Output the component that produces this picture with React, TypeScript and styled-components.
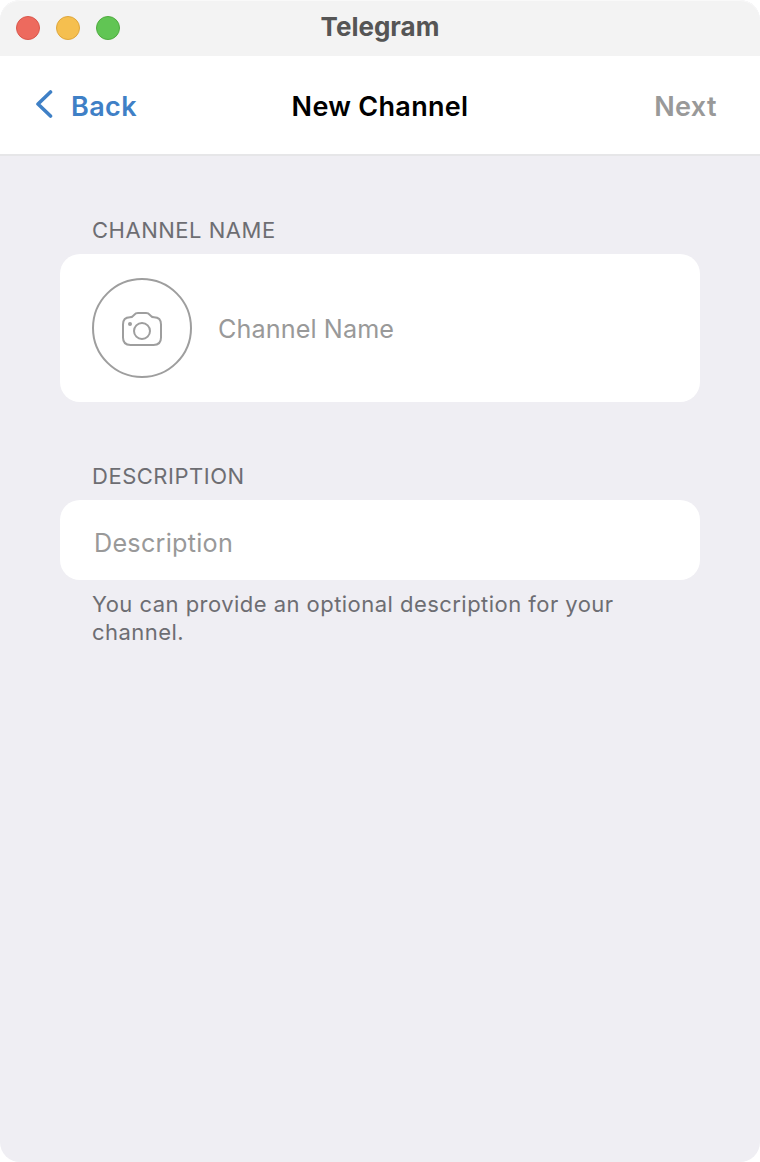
import React from 'react';
import styled, { createGlobalStyle } from 'styled-components';

const GlobalStyle = createGlobalStyle`
  body { margin: 0; background: #fff; font-family: Inter, "Liberation Sans", sans-serif; }
  * { box-sizing: border-box; }
`;

const Window = styled.div`
  width: 760px;
  height: 1162px;
  border-radius: 20px;
  overflow: hidden;
  background: #efeef3;
`;

const TitleBar = styled.header`
  display: grid;
  grid-template-columns: 1fr auto 1fr;
  align-items: center;
  height: 56px;
  padding: 0 16px;
  background: #f3f3f3;
  border-radius: 20px 20px 0 0;
  box-shadow: inset 0 1px 0 #f9f9f9;
`;

const Lights = styled.div`
  display: flex;
  gap: 16px;
`;

const Light = styled.span<{ $fill: string; $edge: string }>`
  width: 24px;
  height: 24px;
  border-radius: 50%;
  background: ${(p) => p.$fill};
  border: 1px solid ${(p) => p.$edge};
`;

const AppTitle = styled.div`
  font-size: 26px;
  line-height: 32px;
  font-weight: 700;
  color: #555;
  margin-top: -2px;
`;

const NavBar = styled.nav`
  display: grid;
  grid-template-columns: 1fr auto 1fr;
  align-items: center;
  height: 100px;
  padding: 4px 43px 0 35px;
  background: #fff;
  border-bottom: 2px solid #e6e6e8;
  font-size: 27px;
  line-height: 32px;
`;

const BackButton = styled.button`
  display: flex;
  align-items: center;
  gap: 18px;
  padding: 0;
  border: 0;
  background: none;
  font: inherit;
  font-weight: 580;
  letter-spacing: 0.4px;
  color: #3f80c6;
`;

const BackChevron = styled.svg`
  width: 18px;
  height: 30px;
  margin-bottom: 6px;
`;

const NavTitle = styled.h1`
  margin: 0 -4px 0 4px;
  font-size: 27px;
  font-weight: 600;
  letter-spacing: 0.3px;
  color: #000;
`;

const NextButton = styled(BackButton)`
  justify-self: end;
  color: #999;
`;

const Form = styled.main`
  padding: 60px 60px 0;
`;

const Section = styled.section`
  margin-bottom: 60px;
`;

const Label = styled.h2`
  margin: 0 0 10px 32px;
  font-size: 22px;
  line-height: 28px;
  font-weight: 400;
  letter-spacing: 0.52px;
  color: #6d6d72;
`;

const Card = styled.div<{ $height: number }>`
  display: flex;
  align-items: center;
  height: ${(p) => p.$height}px;
  padding: 0 32px;
  border-radius: 20px;
  background: #fff;
`;

const PhotoButton = styled.div`
  display: flex;
  align-items: center;
  justify-content: center;
  width: 100px;
  height: 100px;
  border: 2px solid #9e9e9e;
  border-radius: 50%;
  margin-right: 24px;
`;

const Placeholder = styled.span<{ $drop: number; $tracking: number }>`
  font-size: 25.2px;
  line-height: 32px;
  letter-spacing: ${(p) => p.$tracking}px;
  color: #999;
  padding: ${(p) => p.$drop}px 0 0 2px;
`;

const Hint = styled.p`
  margin: 10px 32px 0;
  font-size: 22px;
  line-height: 28px;
  letter-spacing: 0.46px;
  color: #6d6d72;
`;

export default function App() {
  return (
    <>
      <GlobalStyle />
      <Window>
        <TitleBar>
          <Lights>
            <Light $fill="#ed6a5e" $edge="#d9574c" />
            <Light $fill="#f5bf4f" $edge="#dea63c" />
            <Light $fill="#61c554" $edge="#4fab3f" />
          </Lights>
          <AppTitle>Telegram</AppTitle>
        </TitleBar>
        <NavBar>
          <BackButton>
            <BackChevron viewBox="0 0 18 30" fill="none" stroke="#3f80c6" strokeWidth="3.6" strokeLinecap="round" strokeLinejoin="round">
              <path d="M15.5 3 L3 15 L15.5 27" />
            </BackChevron>
            <span>Back</span>
          </BackButton>
          <NavTitle>New Channel</NavTitle>
          <NextButton>Next</NextButton>
        </NavBar>
        <Form>
          <Section>
            <Label>CHANNEL NAME</Label>
            <Card $height={148}>
              <PhotoButton>
                <svg width="40" height="36" viewBox="0 0 40 36" fill="none" stroke="#9e9e9e" strokeWidth="2">
                  <path d="M16 3 H24 Q26.4 3 27.8 4.8 Q29.6 7.2 32 7.2 Q39 7.2 39 14.5 V27.5 Q39 35 31.5 35 H8.5 Q1 35 1 27.5 V14.5 Q1 7.2 8 7.2 Q10.4 7.2 12.2 4.8 Q13.6 3 16 3 Z" />
                  <circle cx="20" cy="21" r="8" />
                  <circle cx="8" cy="14" r="2" fill="#9e9e9e" stroke="none" />
                </svg>
              </PhotoButton>
              <Placeholder $drop={2} $tracking={0.1}>Channel Name</Placeholder>
            </Card>
          </Section>
          <Section>
            <Label>DESCRIPTION</Label>
            <Card $height={80}><Placeholder $drop={6} $tracking={0.25}>Description</Placeholder></Card>
            <Hint>You can provide an optional description for your channel.</Hint>
          </Section>
        </Form>
      </Window>
    </>
  );
}
